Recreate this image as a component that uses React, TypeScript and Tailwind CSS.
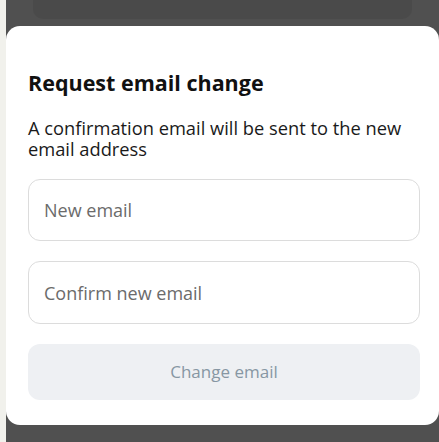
export default function App() {
  return (
    <div className="flex h-[442px] w-[439px] overflow-hidden bg-[#f1f1ec] font-['Open_Sans',sans-serif]">
      <div className="ml-[6px] flex flex-1 flex-col bg-[#505050]">
        {/* sheet peeking behind */}
        <div className="h-[26px] px-[27px]">
          <div className="h-[19px] rounded-b-[10px] bg-[#4a4a4a]" />
        </div>
        <div className="flex flex-col rounded-[14px] bg-white pb-[25px] pl-[22px] pr-[19px] pt-[42px]">
          <h2 className="text-[21.5px] font-bold leading-[30px] text-[#111]">Request email change</h2>
          <p className="mt-[19px] text-[18.3px] leading-[21px] text-[#1a1a1a]">
            A confirmation email will be sent to the new email address
          </p>
          <div className="mt-[20px] flex flex-col gap-[20px]">
            <input
              placeholder="New email"
              className="h-[62px] rounded-[12px] border border-[#dcdcdc] px-[15px] text-[18px] text-[#333] outline-none placeholder:text-[#6b6b6b]"
            />
            <input
              placeholder="Confirm new email"
              className="h-[63px] rounded-[12px] border border-[#dcdcdc] px-[15px] text-[18px] text-[#333] outline-none placeholder:text-[#6b6b6b]"
            />
            <button className="h-[56px] rounded-[12px] bg-[#eef0f3] text-[17px] text-[#8797a3]">
              Change email
            </button>
          </div>
        </div>
      </div>
    </div>
  );
}
